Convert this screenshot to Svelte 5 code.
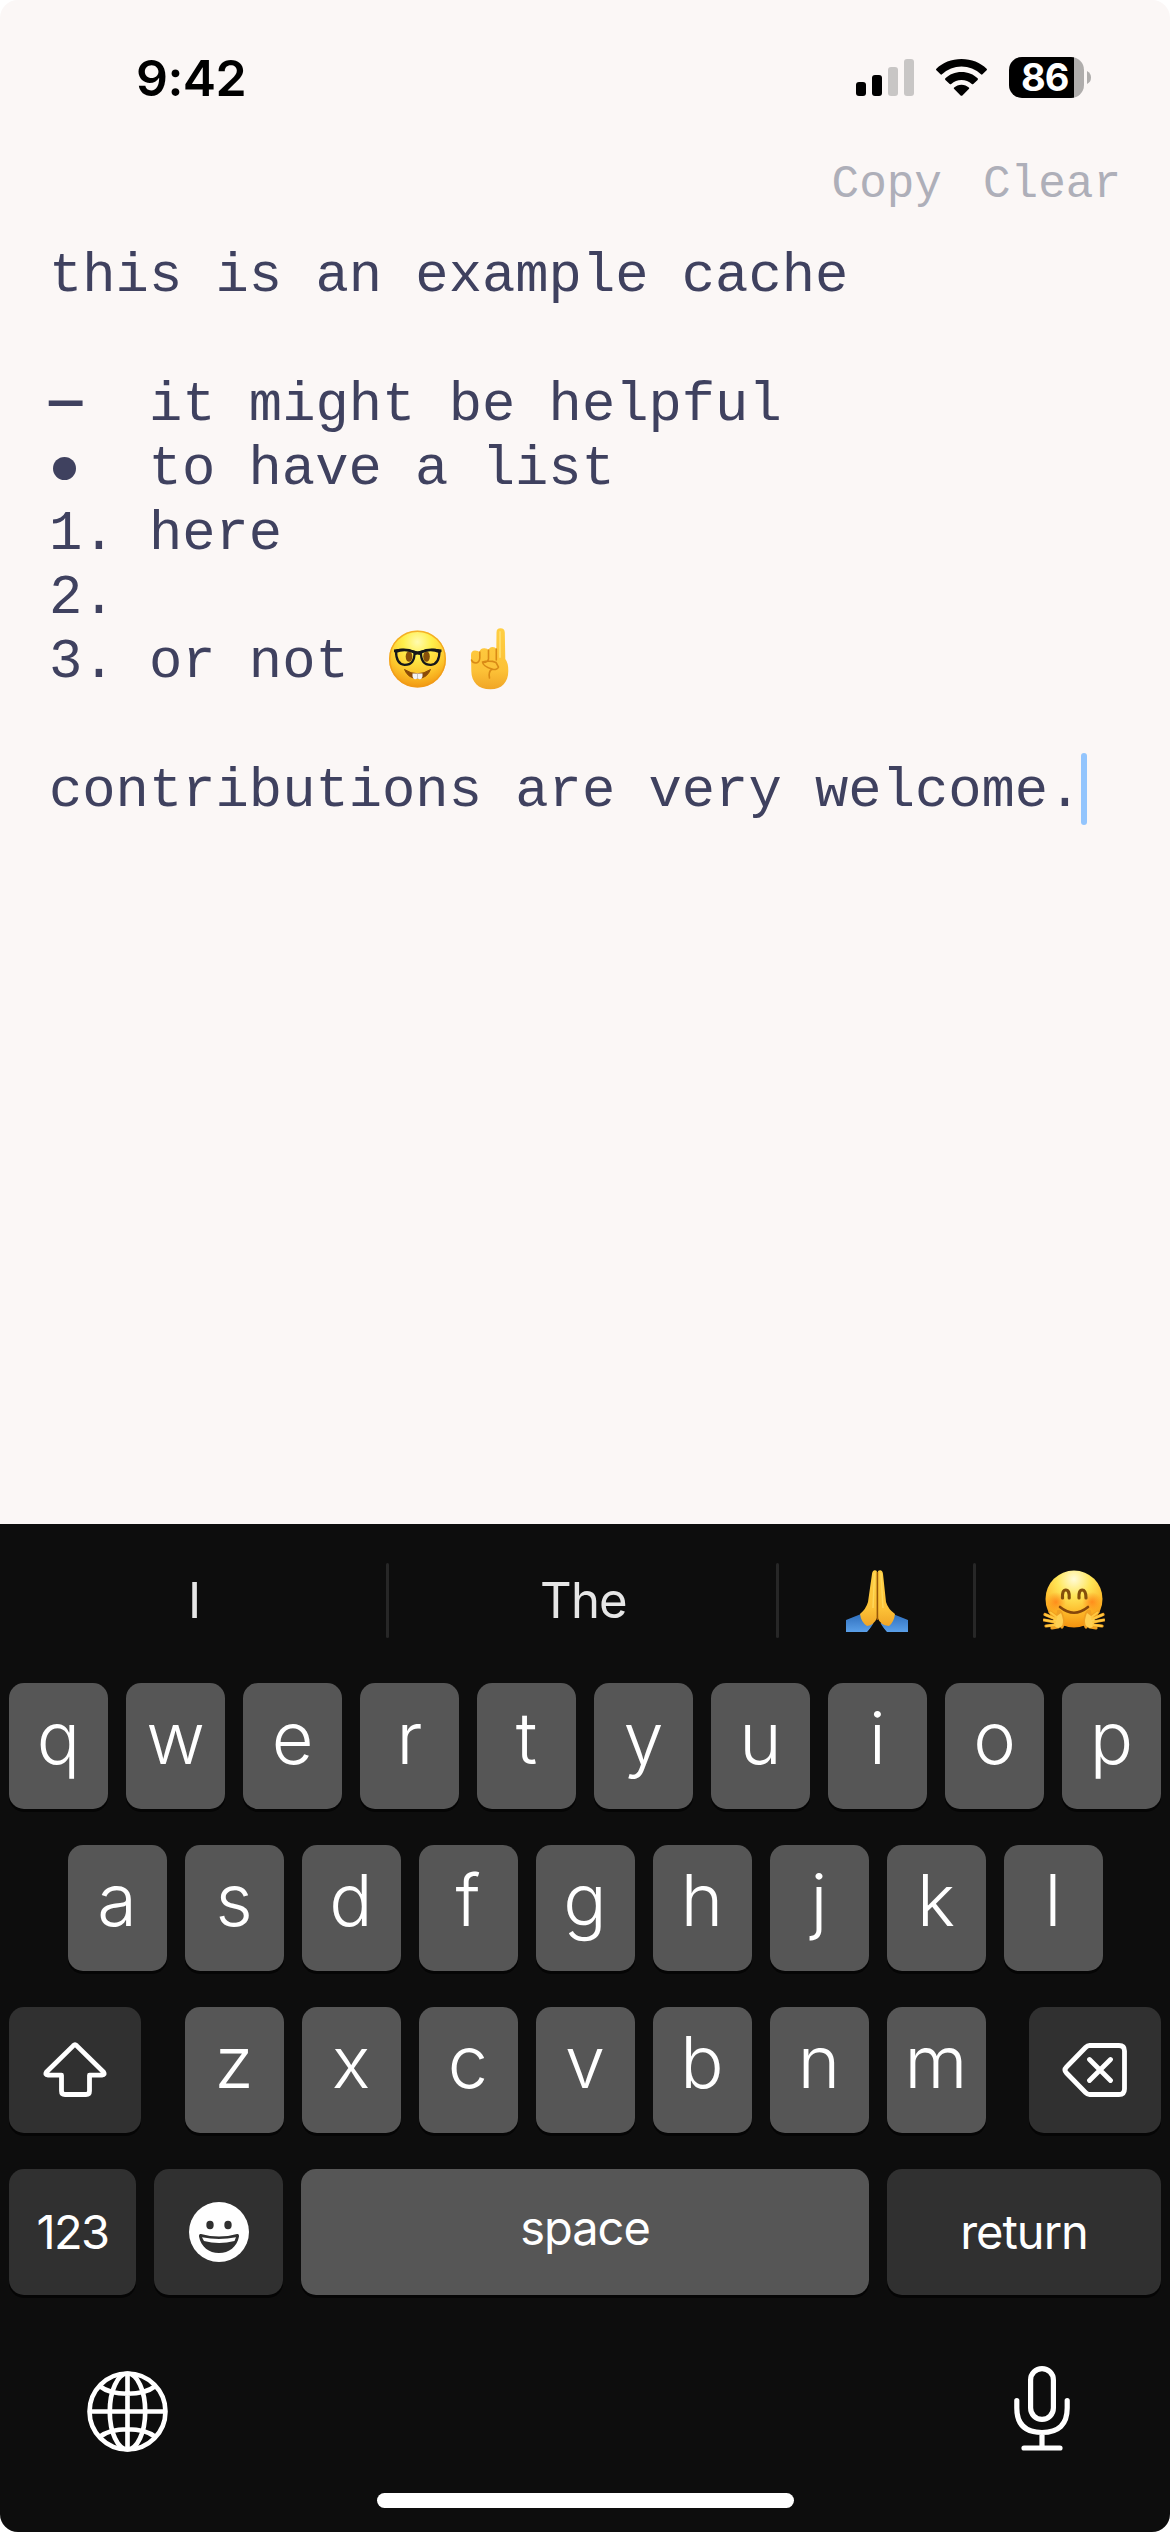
<script>
  const lines = [
    { text: 'this is an example cache' },
    { text: ' ' },
    { mark: '—', text: '  it might be helpful' },
    { bullet: true, text: '  to have a list' },
    { text: '1. here' },
    { text: '2.' },
    { text: '3. or not ', emoji: true },
    { text: ' ' },
    { text: 'contributions are very welcome.', caret: true }
  ];
  const top = [...'qwertyuiop'];
  const home = [...'asdfghjkl'];
  const bottom = [...'zxcvbnm'];
</script>

<div class="phone">
  <header class="status">
    <span class="time">9:42</span>
    <div class="indicators">
      <svg class="signal" viewBox="0 0 58 37">
        <rect x="0" y="23" width="10" height="14" rx="3" />
        <rect x="16" y="16" width="10" height="21" rx="3" />
        <rect class="off" x="32" y="8" width="10" height="29" rx="3" />
        <rect class="off" x="48" y="0" width="10" height="37" rx="3" />
      </svg>
      <svg class="wifi" viewBox="0 0 51 37">
        <path d="M25.5 0C35.500 0 44.500 3.700 50.600 9.700Q51.400 10.500 50.600 11.300L46.500 15.300Q45.800 16 45 15.300A28.500 28.500 0 0 0 6 15.300Q5.200 16 4.500 15.300L.4 11.300Q-.4 10.500 .4 9.700C6.500 3.700 15.500 0 25.500 0Z" />
        <path d="M25.500 13C31.900 13 37.600 15.400 41.600 19.300Q42.400 20.100 41.600 20.900L37.300 25Q36.600 25.700 35.800 25A15.500 15.500 0 0 0 15.200 25Q14.400 25.700 13.700 25L9.400 20.900Q8.600 20.100 9.400 19.300C13.400 15.400 19.100 13 25.500 13Z" />
        <path d="M25.500 25.800C28.400 25.800 30.900 26.900 32.800 28.600Q33.600 29.300 32.800 30.100L26.400 36.400Q25.500 37.200 24.600 36.400L18.200 30.100Q17.400 29.300 18.200 28.600C20.100 26.900 22.600 25.800 25.500 25.800Z" />
      </svg>
      <div class="battery">86</div>
      <svg class="cap" viewBox="0 0 4 13"><path d="M0 0Q4 2 4 6.500T0 13Z" /></svg>
    </div>
  </header>

  <nav class="actions"><span>Copy</span><span>Clear</span></nav>

  <main class="note">
    {#each lines as line}
      <div class="line">
        {#if line.mark}<span class="dash">{line.mark}</span>{/if}
        {#if line.bullet}<span class="bullet"></span>{/if}
        <span>{line.text}</span>
        {#if line.emoji}{@render nerd()}{@render finger()}{/if}
        {#if line.caret}<span class="caret"></span>{/if}
      </div>
    {/each}
  </main>

  <section class="keyboard">
    <div class="suggest">
      <span>I</span>
      <i></i>
      <span>The</span>
      <i></i>
      <span class="half">{@render pray()}</span>
      <i></i>
      <span class="half">{@render hug()}</span>
    </div>
    <div class="row">
      {#each top as k}<div class="key">{k}</div>{/each}
    </div>
    <div class="row">
      {#each home as k}<div class="key">{k}</div>{/each}
    </div>
    <div class="row spread">
      <div class="key dark shift">
        <svg viewBox="0 0 64 56">
          <path d="M30.400 3.600Q32 2.100 33.600 3.600L60.500 30Q62.300 33 59 33.200H46.500V49Q46.500 52.500 43 52.500H22Q18.500 52.500 18.500 49V33.200H5Q1.700 33 3.500 30Z" fill="none" stroke="#fff" stroke-width="4.800" stroke-linejoin="round" />
        </svg>
      </div>
      <div class="letters">
        {#each bottom as k}<div class="key">{k}</div>{/each}
      </div>
      <div class="key dark delete">
        <svg viewBox="0 0 66 56">
          <path d="M27.500 3.500H57Q62.500 3.500 62.500 9V47Q62.500 52.500 57 52.500H27.500Q25.500 52.500 23.500 50.500L4.500 31Q1.500 28 4.500 25L23.500 5.500Q25.500 3.500 27.500 3.500ZM27.500 17.500L48.500 38.500M48.500 17.500L27.500 38.500" fill="none" stroke="#fff" stroke-width="4.800" stroke-linecap="round" stroke-linejoin="round" />
        </svg>
      </div>
    </div>
    <div class="row">
      <div class="key dark word num">123</div>
      <div class="key dark smile">
        <svg viewBox="0 0 60 60">
          <circle cx="30" cy="30" r="30" fill="#fff" />
          <ellipse cx="21" cy="23" rx="3.700" ry="4.200" fill="#303030" />
          <ellipse cx="39" cy="23" rx="3.700" ry="4.200" fill="#303030" />
          <path d="M12 32Q30 37 48 32Q50.500 31.500 50 34.500C48 45 40 51 30 51S12 45 10 34.500Q9.500 31.500 12 32Z" fill="#303030" />
          <path d="M13 35.200Q30 38.800 47 35.200L45.500 39Q30 43 15 39Z" fill="#fff" />
        </svg>
      </div>
      <div class="key word space">space</div>
      <div class="key dark word return">return</div>
    </div>

    <div class="tools">
      <svg class="globe" viewBox="0 0 80 80">
        <g fill="none" stroke="#fff" stroke-width="4.600">
          <circle cx="40" cy="40" r="37.500" />
          <ellipse cx="40" cy="40" rx="17.500" ry="37.500" />
          <path d="M40 2V78M2 40H78M12.500 15Q22 22.500 40 22.500T67.500 15M12.500 65Q22 57.500 40 57.500T67.500 65" />
        </g>
      </svg>
      <svg class="mic" viewBox="0 0 56 85">
        <g fill="none" stroke="#fff" stroke-width="5.200" stroke-linecap="round">
          <rect x="16.600" y="2.600" width="22.800" height="50.800" rx="11.400" />
          <path d="M2.800 34.500V42Q2.800 66.500 28 66.500T53.200 42V34.500M28 67V81M10 82H46" />
        </g>
      </svg>
    </div>
    <div class="indicator"></div>
  </section>
</div>

<svg class="defs" aria-hidden="true">
  <defs>
    <radialGradient id="face" cx=".5" cy=".2" r=".82">
      <stop offset="0" stop-color="#fffbb0" />
      <stop offset=".3" stop-color="#fff04c" />
      <stop offset=".68" stop-color="#fdc52b" />
      <stop offset="1" stop-color="#f0930f" />
    </radialGradient>
    <radialGradient id="glow" cx=".5" cy=".15" r=".85">
      <stop offset="0" stop-color="#fffbd8" />
      <stop offset=".35" stop-color="#ffe658" />
      <stop offset=".7" stop-color="#fdb92a" />
      <stop offset="1" stop-color="#f4920f" />
    </radialGradient>
    <radialGradient id="cheek">
      <stop offset="0" stop-color="#ff7a12" stop-opacity=".75" />
      <stop offset="1" stop-color="#ff7a12" stop-opacity="0" />
    </radialGradient>
    <linearGradient id="skin" x1="0" y1="0" x2="0" y2="1">
      <stop offset="0" stop-color="#ffcf43" />
      <stop offset=".7" stop-color="#fcc137" />
      <stop offset="1" stop-color="#f0a526" />
    </linearGradient>
    <linearGradient id="sleeve" x1="0" y1="0" x2="0" y2="1">
      <stop offset="0" stop-color="#2f6fbd" />
      <stop offset="1" stop-color="#5a9fe8" />
    </linearGradient>
  </defs>
</svg>

{#snippet nerd()}
  <svg class="emoji" viewBox="0 0 72 72">
    <circle cx="35.500" cy="31" r="28.500" fill="url(#face)" />
    <circle cx="35.500" cy="31" r="27.800" fill="none" stroke="#f09a18" stroke-width="1.400" opacity=".75" />
    <path d="M22.500 41.500Q35.500 50 48.500 41.500Q45 50.500 35.500 50.500T22.500 41.500Z" fill="#8a4a08" stroke="#8a4a08" stroke-width="1" stroke-linejoin="round" />
    <path d="M30.500 45.500H40.500V48.500Q40 51.200 37.500 51.200L35.500 50.500L33.500 51.200Q31 51.200 30.500 48.500Z" fill="#f4f4f4" />
    <path d="M35.500 46V50.500" stroke="#b9b9b9" stroke-width=".8" />
    <ellipse cx="27" cy="28.500" rx="3.300" ry="5.300" fill="#87500a" />
    <ellipse cx="44.500" cy="28.500" rx="3.300" ry="5.300" fill="#87500a" />
    <path d="M14 23Q23 20 32.500 24Q33 37 22.500 36.800Q14 36 14 23ZM57.500 23Q48 20 39 24Q38.500 37 49 36.800Q57.500 36 57.500 23Z" fill="none" stroke="#15171a" stroke-width="2.300" />
    <path d="M12 21.500Q22 19.500 32 22.500Q35.500 24 39.500 22.500Q49 19.500 59.500 21.500V24L57 25Q48 21.500 39.500 25.500L37.500 27Q35.500 26 33.500 27L32 25.500Q23 21.500 14 25L12 24Z" fill="#15171a" />
  </svg>
{/snippet}

{#snippet finger()}
  <svg class="emoji" viewBox="0 0 72 72">
    <path d="M42.500 4.500Q42.500 .3 46.500 .3T50.800 4.500L51.300 31Q54.500 35 54.300 43C54.300 54 48 61.300 36.500 61.300C24 61.300 17.500 54 17.300 43L17 27Q17 22.500 21 22.500Q24.500 22.500 25.500 24Q26 20.500 30 20.200Q33.500 20 34.500 22Q35.500 19 38.500 19Q41.500 19 42.300 21Z" fill="url(#skin)" />
    <path d="M25.800 24V30Q25.500 34.500 22 35Q18.500 35 17.500 32M34.500 22V31Q34 34 29.500 34.500M42.300 21V32M28.500 34Q36 32 42 34.500L44.500 39Q43.500 42 38 41.500M28.500 34Q29 38.500 38 41Q34 44 35.500 50" fill="none" stroke="#d98a16" stroke-width="1.600" stroke-linecap="round" />
    <path d="M46 4V29" stroke="#ffdc68" stroke-width="2" stroke-linecap="round" />
  </svg>
{/snippet}

{#snippet pray()}
  <svg class="emoji-key" viewBox="0 0 62 62">
    <path d="M15 44L28 54L21 62H0V50ZM47 44L34 54L41 62H62V50Z" fill="url(#sleeve)" />
    <path d="M22 62L27 54L31 50L35 54L40 62Z" fill="#0d0d0d" />
    <path d="M31 2V48Q28 55 21 56Q15 52 14 44Q20 39 22 32L26 4Q26.500 .2 29 .3Q31 .4 31 2Z" fill="url(#skin)" />
    <path d="M31.800 2V48Q34 55 43 56Q48 52 49 44Q42 39 40 32L37 4Q36.500 .2 34 .3Q31.800 .4 31.800 2Z" fill="url(#skin)" />
    <path d="M31.400 2V50" stroke="#9a5808" stroke-width="1.600" />
    <path d="M28.500 3L27 38M35 3L37 38" stroke="#ffdc62" stroke-width="1.500" opacity=".8" fill="none" />
  </svg>
{/snippet}

{#snippet hug()}
  <svg class="emoji-key" viewBox="0 0 62 62">
    <circle cx="31" cy="29" r="28.500" fill="url(#glow)" />
    <circle cx="13" cy="32" r="10" fill="url(#cheek)" />
    <circle cx="49" cy="32" r="10" fill="url(#cheek)" />
    <path d="M19.500 28Q19 20 22.800 20T26.200 28M36 28Q35.500 20 39.200 20T43 28" fill="none" stroke="#85500c" stroke-width="3.200" stroke-linecap="round" />
    <path d="M17 37Q31 48.500 45 37" fill="none" stroke="#85460a" stroke-width="2.600" stroke-linecap="round" />
    <g id="hand">
      <path d="M19 57Q21 52 19 46Q18 41 15.500 41.500L14.500 47L7 42M13 49L2 44.500M12 52L1 50M12 55L3 56M15 57L9 58" fill="none" stroke="#f0a022" stroke-width="3.200" stroke-linecap="round" />
      <path d="M14 46L18 43Q21 50 19.500 55Q17 59.500 12.500 57L10 50Z" fill="#ffd052" />
      <path d="M13.500 47L7.500 42.500M13 49L2.500 44.800M12 52L1.500 50M12 55L3.500 56" stroke="#ffc840" stroke-width="2" stroke-linecap="round" />
    </g>
    <use href="#hand" transform="translate(62 0) scale(-1 1)" />
  </svg>
{/snippet}

<style>
  :global(body) { margin: 0; background: #fff; }
  .defs { position: absolute; width: 0; height: 0; }
  .phone {
    box-sizing: border-box;
    display: flex;
    flex-direction: column;
    width: 1170px;
    height: 2532px;
    overflow: hidden;
    border-radius: 18px;
    background: #fbf7f6;
    color: #3f415f;
    font-family: Inter, "Liberation Sans", sans-serif;
  }
  svg { display: block; flex: none; }

  .status {
    display: flex;
    justify-content: space-between;
    align-items: center;
    height: 155px;
    padding: 0 79px 0 136px;
    color: #000;
  }
  .time { font-size: 50px; font-weight: 600; letter-spacing: -0.6px; }
  .indicators { display: flex; align-items: center; }
  .signal { width: 58px; height: 37px; }
  .off { fill: #c8c6c5; }
  .wifi { width: 51px; height: 37px; margin: 0 22px; }
  .battery {
    box-sizing: border-box;
    width: 75px;
    height: 41px;
    padding-left: 12px;
    border-radius: 13px;
    background: linear-gradient(90deg, #000 65px, #afadac 65px);
    color: #fff;
    font-size: 38px;
    font-weight: 700;
    line-height: 41px;
    letter-spacing: -1px;
  }
  .cap { width: 4px; height: 13px; margin-left: 3px; fill: #afadac; }

  .actions {
    display: flex;
    justify-content: flex-end;
    gap: 41px;
    height: 90px;
    padding-right: 49px;
    box-sizing: border-box;
    color: #aeafb9;
    font: 46px/60px "Liberation Mono", monospace;
  }

  .note {
    flex: 1;
    padding-left: 49px;
    font: 55.5px/64.4px "Liberation Mono", monospace;
  }
  .line { display: flex; align-items: center; height: 64.4px; white-space: pre; }
  .dash { margin-top: -5px; font-weight: 700; }
  .bullet { width: 23px; height: 23px; margin: 0 6px 4px 4px; border-radius: 50%; background: #3f415f; }
  .emoji { width: 72px; height: 72px; }
  .caret { width: 6px; height: 72px; margin-top: -6px; border-radius: 3px; background: #93c5fd; }

  .keyboard {
    display: flex;
    flex-direction: column;
    height: 1008px;
    background: #0d0d0d;
    color: #fff;
  }
  .suggest {
    display: flex;
    align-items: center;
    height: 153px;
    margin-bottom: 6px;
    color: #e6e6e6;
    font-size: 49px;
    letter-spacing: -0.8px;
  }
  .suggest span { display: flex; flex: 2; justify-content: center; padding-left: 2px; }
  .suggest .half { flex: 1; }
  .suggest i { width: 3px; height: 75px; border-radius: 2px; background: #272727; }
  .emoji-key { width: 62px; height: 62px; }

  .row {
    display: flex;
    justify-content: center;
    gap: 18px;
    margin-bottom: 36px;
    padding: 0 9px;
  }
  .spread { justify-content: space-between; }
  .letters { display: flex; gap: 18px; }
  .key {
    display: flex;
    box-sizing: border-box;
    flex: none;
    align-items: center;
    justify-content: center;
    width: 99px;
    height: 126px;
    padding-bottom: 17px;
    border-radius: 15px;
    background: #565656;
    box-shadow: 0 3px 0 #050505;
    font-size: 72px;
    font-weight: 350;
    line-height: 1;
  }
  .dark { padding-bottom: 0; background: #303030; }
  .shift, .delete { width: 132px; }
  .shift svg { width: 64px; height: 56px; }
  .delete svg { width: 66px; height: 56px; }
  .word { padding-bottom: 2px; font-size: 47px; font-weight: 400; letter-spacing: -1px; }
  .num { width: 127px; letter-spacing: -1.6px; }
  .smile { width: 129px; }
  .smile svg { width: 60px; height: 60px; }
  .space { flex: 1; padding-bottom: 9px; }
  .return { width: 274px; }

  .tools {
    display: flex;
    justify-content: space-between;
    align-items: center;
    height: 85px;
    margin-top: 35px;
    padding: 0 100px 0 87px;
  }
  .globe { width: 81px; height: 81px; margin-top: 6px; }
  .mic { width: 56px; height: 85px; }
  .indicator { width: 417px; height: 15px; margin: 42px auto 0; border-radius: 8px; background: #fff; }
</style>
